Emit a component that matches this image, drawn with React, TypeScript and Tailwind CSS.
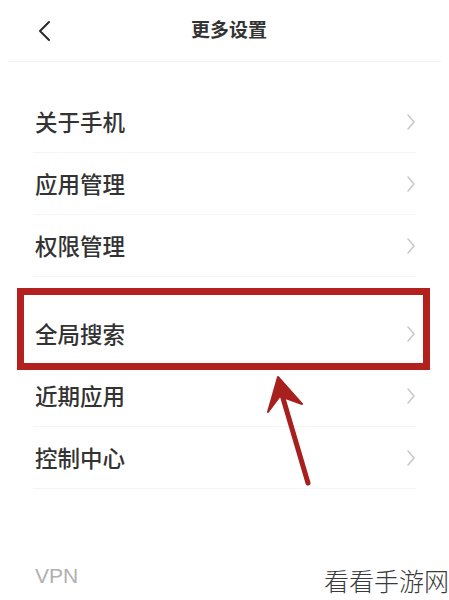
import React from "react";

const groups: string[][] = [
  ["关于手机", "应用管理", "权限管理"],
  ["全局搜索", "近期应用", "控制中心"],
];

const Chevron = () => (
  <svg width="10" height="18" viewBox="0 0 10 18" fill="none">
    <path d="M2 2 L8 9 L2 16" stroke="#c9c9c9" strokeWidth="1.6" strokeLinecap="round" strokeLinejoin="round" />
  </svg>
);

const Row = ({ label }: { label: string }) => (
  <div className="h-[62px] flex items-center justify-between pl-[2px] border-b border-[#f5f5f5]">
    <span className="text-[22.5px] font-medium text-[#333]">{label}</span>
    <Chevron />
  </div>
);

export default function App() {
  return (
    <div
      className="relative w-[449px] h-[600px] bg-white overflow-hidden"
      style={{ fontFamily: '"Noto Sans CJK SC", "Noto Sans", sans-serif' }}
    >
      <div className="h-[62px] mx-2 flex items-center border-b border-[#f3f3f3] pl-[29px] pr-[36px]">
        <svg width="16" height="22" viewBox="0 0 16 22" fill="none">
          <path d="M12 2 L3 11 L12 20" stroke="#2a2a2a" strokeWidth="2" strokeLinecap="round" strokeLinejoin="round" />
        </svg>
        <div className="flex-1 text-center text-[19px] font-bold text-[#333] -mt-[2px]">更多设置</div>
      </div>

      <div className="pt-[29px] px-[33px] flex flex-col gap-[26px]">
        {groups.map((g, gi) => (
          <div key={gi} className="flex flex-col">
            {g.map((label) => (
              <Row key={label} label={label} />
            ))}
          </div>
        ))}
        <div
          className="mt-[45px] pl-[2px] text-[21px] text-[#b0b0b0]"
          style={{ fontFamily: '"Liberation Sans", sans-serif' }}
        >
          VPN
        </div>
      </div>

      {/* annotation box */}
      <div className="absolute left-[17px] top-[288px] w-[413px] h-[82px] border-[7px] border-[#b3211f]" />

      {/* annotation arrow */}
      <svg className="absolute left-0 top-0" width="449" height="600" viewBox="0 0 449 600" fill="none">
        <path d="M308 483 L280 388" stroke="#a8201e" strokeWidth="5" strokeLinecap="round" />
        <path d="M278 377 L268 412 L280 396 L302 404 Z" fill="#a8201e" stroke="#a8201e" strokeWidth="2" strokeLinejoin="round" />
      </svg>

      {/* watermark */}
      <div className="absolute right-0 bottom-[5px] text-[25px] text-[#3a3a3a] font-light leading-[30px]">
        看看手游网
      </div>
    </div>
  );
}
